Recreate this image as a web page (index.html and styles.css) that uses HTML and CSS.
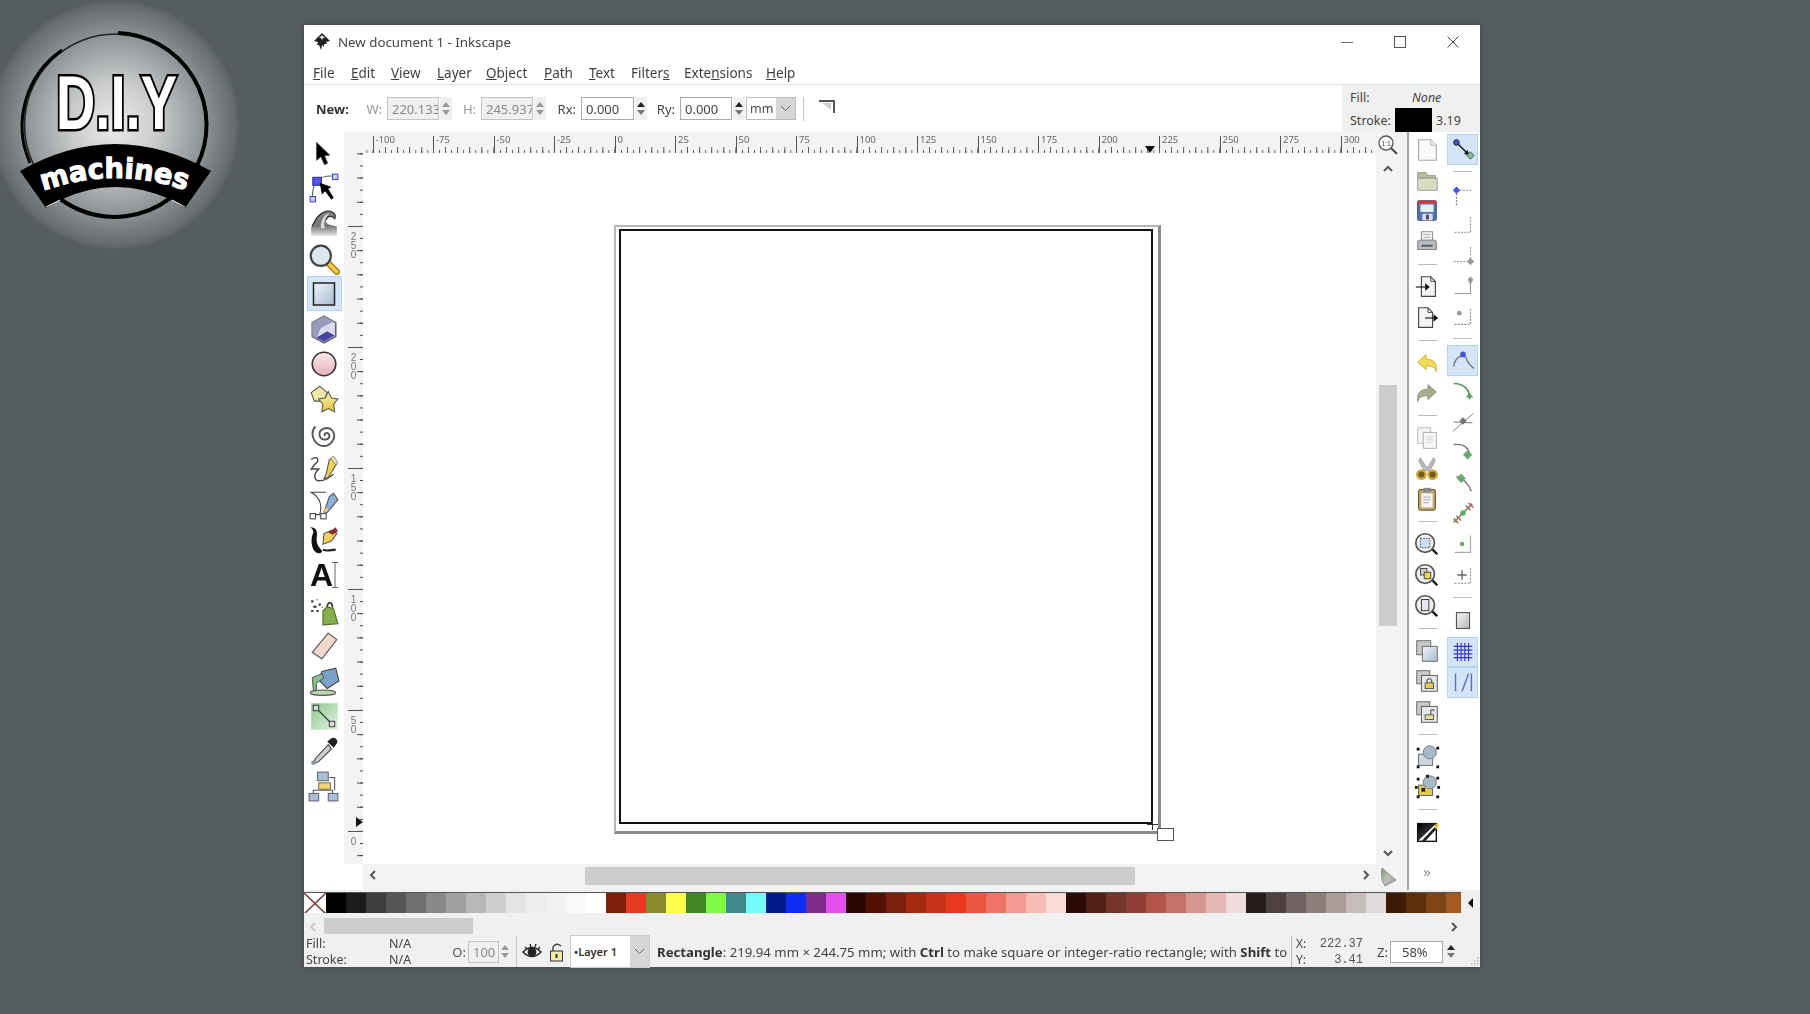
FILE: index.html
```html
<!DOCTYPE html>
<html lang="en">
<head>
<meta charset="utf-8">
<title>New document 1 - Inkscape</title>
<link rel="stylesheet" href="styles.css">
</head>
<body>
<svg class="defs" width="0" height="0" aria-hidden="true">
  <defs>
    <linearGradient id="gBlue" x1="0" y1="0" x2="1" y2="1"><stop offset="0" stop-color="#eef3f8"/><stop offset="1" stop-color="#a9bdd4"/></linearGradient>
    <linearGradient id="gPink" x1="0" y1="0" x2="0" y2="1"><stop offset="0" stop-color="#fbeaec"/><stop offset="1" stop-color="#e8aebb"/></linearGradient>
    <linearGradient id="gYel" x1="0" y1="0" x2="0" y2="1"><stop offset="0" stop-color="#fbf3b0"/><stop offset="1" stop-color="#e6c63c"/></linearGradient>
    <linearGradient id="gGray" x1="0" y1="0" x2="1" y2="1"><stop offset="0" stop-color="#f6f6f6"/><stop offset="1" stop-color="#b5b8bb"/></linearGradient>
    <linearGradient id="gWave" x1="0" y1="0" x2="0" y2="1"><stop offset="0" stop-color="#888"/><stop offset=".6" stop-color="#777"/><stop offset="1" stop-color="#e2e2e2"/></linearGradient>
    <linearGradient id="gGreen" x1="0" y1="0" x2="1" y2="1"><stop offset="0" stop-color="#8fca8f"/><stop offset="1" stop-color="#e0f2e0"/></linearGradient>
    <linearGradient id="gFill" x1="0" y1="0" x2="1" y2="1"><stop offset="0" stop-color="#000"/><stop offset=".55" stop-color="#333"/><stop offset="1" stop-color="#ddd"/></linearGradient>
    <linearGradient id="gCms" x1="0" y1="0" x2="1" y2="1"><stop offset="0" stop-color="#7fa06f"/><stop offset=".5" stop-color="#b9c4b0"/><stop offset="1" stop-color="#a689c0"/></linearGradient>
    <radialGradient id="gGlow"><stop offset="0" stop-color="#eceded"/><stop offset=".35" stop-color="#c9cbcc"/><stop offset=".72" stop-color="#8e9395"/><stop offset=".96" stop-color="#666c6f"/><stop offset="1" stop-color="#5a6064"/></radialGradient>
  </defs>
</svg>

<svg class="logo" width="240" height="250" viewBox="0 0 240 250" role="img" aria-label="D.I.Y machines">
  <circle cx="115" cy="125" r="124" fill="url(#gGlow)"/>
  <circle cx="115.5" cy="125" r="91" fill="none" stroke="#222" stroke-width="1.6"/>
  <path d="M118 33 A92 92 0 1 1 44 184" fill="none" stroke="#000" stroke-width="4"/>
  <path d="M30 163 A92 92 0 0 1 62 50" fill="none" stroke="#000" stroke-width="3"/>
  <text class="logo-diy" x="56" y="129" textLength="121" lengthAdjust="spacingAndGlyphs">D.I.Y</text>
  <path d="M20 171 Q115 117 211 171 L185 208 L172 200 Q115 174 60 200 L46 208 Z" fill="#000"/>
  <path d="M46 207 L60 200 M172 200 L185 207" stroke="#fff" stroke-width="1"/>
  <path id="logoArc" d="M43 191 Q115 165 188 191" fill="none"/>
  <text class="logo-mach"><textPath href="#logoArc" textLength="146" lengthAdjust="spacingAndGlyphs">machines</textPath></text>
</svg>

<div class="window">
  <header class="titlebar">
    <svg class="app-icon" width="20" height="20" viewBox="0 0 20 20"><path d="M10 1 L18 9 L14 10 L15 12 L12 12 L12 15 L10 13 L9 18 L7 13 L5 13 L6 10 L2 9 Z" fill="#222"/><path d="M10 3 L13 6 L11 6 L10 8 L9 6 L7 6 Z" fill="#ddd"/></svg>
    <span class="title-text">New document 1 - Inkscape</span>
    <div class="win-btns">
      <svg width="12" height="12" viewBox="0 0 12 12"><path d="M0 6.5H12" stroke="#666" stroke-width="1"/></svg>
      <svg width="12" height="12" viewBox="0 0 12 12"><rect x=".5" y=".5" width="11" height="11" fill="none" stroke="#555"/></svg>
      <svg width="12" height="12" viewBox="0 0 12 12"><path d="M.5 .5L11.5 11.5M11.5 .5L.5 11.5" stroke="#444"/></svg>
    </div>
  </header>

  <nav class="menubar">
    <span class="m-file"><u>F</u>ile</span><span class="m-edit"><u>E</u>dit</span><span class="m-view"><u>V</u>iew</span><span class="m-layer"><u>L</u>ayer</span><span class="m-object"><u>O</u>bject</span><span class="m-path"><u>P</u>ath</span><span class="m-text"><u>T</u>ext</span><span class="m-filters">Filter<u>s</u></span><span class="m-ext">Exte<u>n</u>sions</span><span><u>H</u>elp</span>
  </nav>

  <section class="toolopts">
    <b class="new-label">New:</b>
    <span class="lbl l34 dim">W:</span><span class="field off w52">220.133</span><span class="spin off"><i class="up"></i><i class="dn"></i></span>
    <span class="lbl l28 dim">H:</span><span class="field off w52">245.937</span><span class="spin off"><i class="up"></i><i class="dn"></i></span>
    <span class="lbl l32">Rx:</span><span class="field w53">0.000</span><span class="spin"><i class="up"></i><i class="dn"></i></span>
    <span class="lbl l33">Ry:</span><span class="field w52">0.000</span><span class="spin"><i class="up"></i><i class="dn"></i></span>
    <span class="unit"><span class="unit-text">mm</span><span class="chev"><svg width="11" height="7" viewBox="0 0 11 7"><path d="M1 1L5.500 5.500L10 1" fill="none" stroke="#666"/></svg></span></span>
    <span class="vsep"></span>
    <svg class="corner" width="18" height="14" viewBox="0 0 18 14"><path d="M1 1H16V13" fill="none" stroke="#555" stroke-width="2"/><path d="M4 3H13V10Z" fill="#ccc"/></svg>
    <div class="selstyle">
      <div class="sel-row"><span class="sel-lbl">Fill:</span><em class="sel-none">None</em></div>
      <div class="sel-row"><span class="sel-lbl">Stroke:</span><span class="swatch"></span><span class="sel-num">3.19</span></div>
    </div>
  </section>

  <div class="main">
    <aside class="tools">
      <div class="tool"><svg viewBox="0 0 30 30"><path d="M8 5V22L12 18.500L15.500 26L18.500 24.500L15.500 17.500L20.500 17Z" fill="#000" stroke="#333" stroke-width=".5"/></svg></div>
      <div class="tool"><svg viewBox="0 0 30 30"><path d="M8 8Q14 3 25 4M7 9Q4 16 4 24" fill="none" stroke="#666"/><rect x="4.500" y="5" width="8" height="7.500" fill="#5258e0" stroke="#2a2ea0"/><rect x="23" y="2" width="5" height="5" fill="#cfd0ff" stroke="#4448c0"/><rect x="2" y="23" width="5" height="5" fill="#cfd0ff" stroke="#4448c0"/><path d="M11 10L13 21L16 18L22 26L24 24L19 16L22 14Z" fill="#000"/></svg></div>
      <div class="tool"><svg viewBox="0 0 30 30"><path d="M3 27V19C6 12 9 6 17 4C23 3 27 7 25 11C23 8 18 8 17 12C16 16 20 17 27 18V27Z" fill="url(#gWave)"/><path d="M12 20C12 12 15 7 20 6C16 10 14 15 16 20Z" fill="#ddd"/><path d="M4 18C7 12 10 6 17 4C23 3 27 7 25 11C23 8 18 8 17 12" fill="none" stroke="#333" stroke-width="1.200"/></svg></div>
      <div class="tool"><svg viewBox="0 0 30 30"><path d="M18 18L27 27" stroke="#a07c10" stroke-width="6" stroke-linecap="round"/><path d="M19 19L27 27" stroke="#f0c84a" stroke-width="3.500" stroke-linecap="round"/><circle cx="12" cy="12" r="9.500" fill="#dde6f0" stroke="#444" stroke-width="2"/></svg></div>
      <div class="tool on"><svg viewBox="0 0 30 30"><rect x="4.500" y="4" width="21" height="22" fill="url(#gBlue)" stroke="#222" stroke-width="1.500"/></svg></div>
      <div class="tool"><svg viewBox="0 0 30 30"><path d="M15 3L26 9V22L15 28L4 22V9Z" fill="#dcdcf4" stroke="#666" stroke-width="1.500"/><path d="M15 3L4 9V22L8 24L12 14L24 8Z" fill="#9a9abd"/><path d="M8 23L18 17L25 21L15 27Z" fill="#4545a6"/></svg></div>
      <div class="tool"><svg viewBox="0 0 30 30"><circle cx="15" cy="15" r="11" fill="url(#gPink)" stroke="#333" stroke-width="1.500"/></svg></div>
      <div class="tool"><svg viewBox="0 0 30 30"><path d="M3 9L11 3L18 9L15 17L6 17Z" fill="#f3e9a8" stroke="#555"/><path d="M19 8L22 14L28 15L24 20L25 27L19 24L13 27L14 20L10 15L16 14Z" fill="url(#gYel)" stroke="#555"/></svg></div>
      <div class="tool"><svg viewBox="0 0 30 30"><path d="M16 16C14 13 19 12 20 15C21 20 13 21 11 16C9 9 19 6 23 11C28 18 20 27 12 25C4 22 2 12 7 7" fill="none" stroke="#555" stroke-width="1.800"/></svg></div>
      <div class="tool"><svg viewBox="0 0 30 30"><path d="M3 5C9 1 11 6 7 9L3 14H10C4 20 6 26 12 25C17 25 19 22 24 19" fill="none" stroke="#444" stroke-width="1.300"/><path d="M17 19L15 23L19 22L27 9L24 4L20 5Z" fill="#f2d458" stroke="#555"/><path d="M21 4L24 2L28 8L26 10Z" fill="#efe2b0" stroke="#555" stroke-width=".6"/></svg></div>
      <div class="tool"><svg viewBox="0 0 30 30"><path d="M2 3H17M3 3Q15 10 11 24H5" fill="none" stroke="#444"/><rect x="2" y="23" width="5" height="5" fill="#fff" stroke="#444"/><rect x="12" y="23" width="5" height="5" fill="#fff" stroke="#444"/><path d="M16 19L14 23L18 22L28 10L24 4L20 7Z" fill="#8fb0d8" stroke="#555"/><path d="M14 23L17 17L19 20Z" fill="#f2d458"/></svg></div>
      <div class="tool"><svg viewBox="0 0 30 30"><path d="M2 3C9 3 9 8 8 14C8 20 11 22 13 25C14 27 10 28 8 27C3 24 2 14 5 8C5 6 4 4 2 3Z" fill="#111"/><path d="M14 19L15 9L22 6L27 9L22 16Z" fill="#f2d458" stroke="#555"/><path d="M19 8L26 3L28 7L23 10Z" fill="#8a2f3a"/><path d="M14 24C18 26 22 24 26 24" stroke="#222" stroke-width="2" fill="none"/></svg></div>
      <div class="tool"><span class="tool-a">A</span><svg class="tool-cursor" viewBox="0 0 6 26"><path d="M3 0V26M0 .5H6M0 25.500H6" stroke="#666" fill="none"/></svg></div>
      <div class="tool"><svg viewBox="0 0 30 30"><path d="M14 15L18 11L24 13L28 27L14 28Z" fill="#88b04a" stroke="#4b6b22"/><path d="M18 11C18 6 23 6 23 12" fill="none" stroke="#333" stroke-width="1.500"/><path d="M3 5h2v2H3zM8 4h1v1H8zM5 10h3v2H5zM10 8h2v2h-2zM3 14h2v2H3zM8 14h2v2H8zM13 11h1v1h-1z" fill="#333"/></svg></div>
      <div class="tool"><svg viewBox="0 0 30 30"><path d="M19 3L27 9L13 27L4 21Z" fill="#f3d9cc" stroke="#666" stroke-width="1.200"/></svg></div>
      <div class="tool"><svg viewBox="0 0 30 30"><ellipse cx="14" cy="26" rx="12" ry="2.500" fill="#b7d7b0" stroke="#555"/><path d="M13 6L26 3L29 15L18 22L10 14Z" fill="#7ba2c9" stroke="#444"/><path d="M4 12L13 8L15 12L8 17L8 24L5 24Z" fill="#86c08c" stroke="#444" stroke-width=".8"/></svg></div>
      <div class="tool"><svg viewBox="0 0 30 30"><rect x="3" y="3" width="25" height="25" fill="url(#gGreen)"/><path d="M8 8L22 22" stroke="#444" stroke-width="1.300"/><rect x="5" y="5" width="5" height="5" fill="#ddd" stroke="#444"/><rect x="20" y="20" width="5" height="5" fill="#ddd" stroke="#444"/></svg></div>
      <div class="tool"><svg viewBox="0 0 30 30"><path d="M18 6L24 12L27 8C29 5 25 1 22 3Z" fill="#222"/><path d="M19 9L7 22L5 27L10 25L22 13Z" fill="#c9ccd0" stroke="#444"/><circle cx="5" cy="26" r="2" fill="#7c94b0"/></svg></div>
      <div class="tool"><svg viewBox="0 0 30 30"><path d="M5 25V19H23V25M14 19V15M20 7H25V19" fill="none" stroke="#555"/><rect x="9" y="2" width="10" height="8" fill="#a8bfd8" stroke="#667"/><rect x="10" y="12" width="11" height="6" fill="#f0d870" stroke="#776"/><rect x="1" y="22" width="9" height="7" fill="#a8bfd8" stroke="#667"/><rect x="19" y="22" width="9" height="7" fill="#a8bfd8" stroke="#667"/></svg></div>
    </aside>

    <div class="work">
      <div class="corner-cell"></div>
      <div class="hruler">
        <div class="hlead"></div>
        <div class="hcell">-100</div><div class="hcell">-75</div><div class="hcell">-50</div><div class="hcell">-25</div><div class="hcell">0</div><div class="hcell">25</div><div class="hcell">50</div><div class="hcell">75</div><div class="hcell">100</div><div class="hcell">125</div><div class="hcell">150</div><div class="hcell">175</div><div class="hcell">200</div><div class="hcell">225</div><div class="hcell">250</div><div class="hcell">275</div><div class="hcell">300</div>
        <i class="hmark"></i>
      </div>
      <div class="zoom-cell"><svg width="22" height="22" viewBox="0 0 22 22"><circle cx="9" cy="9" r="7" fill="#fff" stroke="#555" stroke-width="1.300"/><path d="M14 14L20 20" stroke="#444" stroke-width="2"/><text class="zoom-txt" x="9" y="12" text-anchor="middle">1:1</text></svg></div>

      <div class="vruler">
        <div class="vlead"></div>
        <div class="vcell"><span class="vnum">250</span></div>
        <div class="vcell"><span class="vnum">200</span></div>
        <div class="vcell"><span class="vnum">150</span></div>
        <div class="vcell"><span class="vnum">100</span></div>
        <div class="vcell"><span class="vnum">50</span></div>
        <div class="vcell"><span class="vnum">0</span></div>
        <i class="vmark"></i>
      </div>

      <div class="canvas">
        <div class="page"></div>
        <div class="doc-rect"></div>
        <div class="handle"></div>
        <svg class="cross" width="11" height="11" viewBox="0 0 11 11"><path d="M5.500 0V11M0 5.500H11" stroke="#333"/></svg>
      </div>

      <div class="vscroll">
        <svg width="12" height="8" viewBox="0 0 12 8"><path d="M2 6L6 2L10 6" fill="none" stroke="#555" stroke-width="2"/></svg>
        <div class="vthumb"></div>
        <svg width="12" height="8" viewBox="0 0 12 8"><path d="M2 2L6 6L10 2" fill="none" stroke="#555" stroke-width="2"/></svg>
      </div>

      <div class="blank-cell"></div>
      <div class="hscroll">
        <svg width="8" height="12" viewBox="0 0 8 12"><path d="M6 2L2 6L6 10" fill="none" stroke="#555" stroke-width="2"/></svg>
        <div class="hthumb"></div>
        <svg width="8" height="12" viewBox="0 0 8 12"><path d="M2 2L6 6L2 10" fill="none" stroke="#555" stroke-width="2"/></svg>
      </div>
      <div class="cms-cell"><svg width="18" height="20" viewBox="0 0 18 20"><path d="M3 1L17 13L6 19Q1 12 3 1Z" fill="url(#gCms)" stroke="#777" stroke-width=".7"/></svg></div>
    </div>

    <aside class="right">
      <div class="cmds">
        <div class="cmd"><svg viewBox="0 0 30 30"><path d="M6 4H19L25 10V26H6Z" fill="#fafafa" stroke="#aaa" stroke-width="1.200"/><path d="M19 4V10H25" fill="#eee" stroke="#bbb"/></svg></div>
        <div class="cmd"><svg viewBox="0 0 30 30"><path d="M5 6H14L16 9H24V12H5Z" fill="#bcbf9d" stroke="#999"/><path d="M5 12H26V25H5Z" fill="#dadcc0" stroke="#999"/></svg></div>
        <div class="cmd"><svg viewBox="0 0 30 30"><rect x="5" y="4" width="20" height="21" rx="1.500" fill="#4f77b3" stroke="#345"/><rect x="5" y="4" width="20" height="3" fill="#d33"/><rect x="8" y="8" width="14" height="8" fill="#e8eef6"/><rect x="10" y="18" width="11" height="7" fill="#dde"/><rect x="14" y="19" width="3" height="5" fill="#445"/></svg></div>
        <div class="cmd"><svg viewBox="0 0 30 30"><rect x="9" y="4" width="12" height="10" fill="#f4f4f4" stroke="#888"/><path d="M11 7H19M11 10H19" stroke="#aaa"/><path d="M5 15Q5 13 8 13H22Q25 13 25 15V23H5Z" fill="#b8bcc0" stroke="#777"/><rect x="9" y="18" width="12" height="2" fill="#555"/></svg></div>
        <div class="sep"></div>
        <div class="cmd"><svg viewBox="0 0 30 30"><path d="M9 4H19L24 9V25H9Z" fill="#f4f4f4" stroke="#444" stroke-width="1.200"/><path d="M19 4V9H24" fill="none" stroke="#444"/><path d="M3 15H15" stroke="#111" stroke-width="1.200"/><path d="M13 11L18 15L13 19Z" fill="#111"/></svg></div>
        <div class="cmd"><svg viewBox="0 0 30 30"><path d="M6 4H16L21 9V25H6Z" fill="#f4f4f4" stroke="#444" stroke-width="1.200"/><path d="M16 4V9H21" fill="none" stroke="#444"/><path d="M13 15H24" stroke="#111" stroke-width="1.200"/><path d="M22 11L27 15L22 19Z" fill="#111"/></svg></div>
        <div class="sep"></div>
        <div class="cmd"><svg viewBox="0 0 30 30"><path d="M5 14L14 6V11C22 11 26 15 25 24C23 19 20 18 14 18V22Z" fill="#f1da55" stroke="#c8ad2e"/></svg></div>
        <div class="cmd"><svg viewBox="0 0 30 30"><path d="M25 14L16 6V11C8 11 4 15 5 24C7 19 10 18 16 18V22Z" fill="#a8ac8c" stroke="#8d917a"/></svg></div>
        <div class="sep"></div>
        <div class="cmd"><svg viewBox="0 0 30 30"><rect x="5" y="4" width="14" height="17" fill="#f4f4f4" stroke="#bbb"/><rect x="11" y="9" width="14" height="17" fill="#f8f8f8" stroke="#aaa"/><path d="M14 14H22M14 17H22M14 20H20" stroke="#ccc"/></svg></div>
        <div class="cmd"><svg viewBox="0 0 30 30"><path d="M8 3L15 14L22 3L24 6L18 17L12 17L6 6Z" fill="#bbb" stroke="#888" stroke-width=".7"/><circle cx="9" cy="21" r="4.500" fill="#6f5a20" stroke="#cfa83a" stroke-width="2.500"/><circle cx="21" cy="21" r="4.500" fill="#6f5a20" stroke="#cfa83a" stroke-width="2.500"/></svg></div>
        <div class="cmd"><svg viewBox="0 0 30 30"><rect x="6" y="5" width="18" height="22" rx="2" fill="#c5a971" stroke="#776030" stroke-width="1.300"/><rect x="9" y="9" width="12" height="15" fill="#f6f6f6"/><rect x="11" y="3" width="8" height="5" fill="#8a8a8a"/><path d="M11 13H19M11 16H19M11 19H17" stroke="#aaa"/></svg></div>
        <div class="sep"></div>
        <div class="cmd"><svg viewBox="0 0 30 30"><path d="M20 20L26 26" stroke="#111" stroke-width="2.500"/><circle cx="13" cy="14" r="10" fill="#eee" stroke="#555" stroke-width="1.800"/><rect x="8" y="9" width="10" height="10" fill="#cfdcf0" stroke="#333" stroke-dasharray="1.500 1.500"/></svg></div>
        <div class="cmd"><svg viewBox="0 0 30 30"><path d="M20 20L26 26" stroke="#111" stroke-width="2.500"/><circle cx="13" cy="14" r="10" fill="#eee" stroke="#555" stroke-width="1.800"/><rect x="8" y="8" width="7" height="7" fill="#ccc" stroke="#444"/><rect x="12" y="12" width="7" height="7" fill="#e8d25e" stroke="#444"/></svg></div>
        <div class="cmd"><svg viewBox="0 0 30 30"><path d="M20 20L26 26" stroke="#111" stroke-width="2.500"/><circle cx="13" cy="14" r="10" fill="#eee" stroke="#555" stroke-width="1.800"/><rect x="9" y="8" width="8" height="12" fill="#e4e8ee" stroke="#333"/></svg></div>
        <div class="sep"></div>
        <div class="cmd"><svg viewBox="0 0 30 30"><rect x="4" y="4" width="15" height="15" fill="#c8c8c8" stroke="#666"/><rect x="10" y="10" width="16" height="16" fill="url(#gBlue)" stroke="#666"/></svg></div>
        <div class="cmd"><svg viewBox="0 0 30 30"><rect x="4" y="4" width="14" height="14" fill="#c8c8c8" stroke="#666"/><rect x="9" y="9" width="17" height="17" fill="#e4e6e8" stroke="#555"/><rect x="13" y="17" width="9" height="6" fill="#e8cc50" stroke="#555"/><path d="M15 17V14Q17.500 11 20 14V17" fill="none" stroke="#555" stroke-width="1.200"/></svg></div>
        <div class="cmd"><svg viewBox="0 0 30 30"><rect x="4" y="4" width="14" height="14" fill="#c8c8c8" stroke="#666"/><rect x="9" y="9" width="17" height="17" fill="#e4e6e8" stroke="#555"/><rect x="13" y="18" width="9" height="5" fill="#e8e090" stroke="#555"/><path d="M19 18V14Q21 11 23 14" fill="none" stroke="#555" stroke-width="1.200"/></svg></div>
        <div class="sep"></div>
        <div class="cmd"><svg viewBox="0 0 30 30"><rect x="6" y="12" width="15" height="12" fill="#cfd6de" stroke="#666"/><circle cx="18" cy="10" r="7" fill="#a9b8c6" stroke="#778"/><path d="M4 5h3v3H4zM25 4h3v3h-3zM4 24h3v3H4zM25 24h3v3h-3z" fill="#111"/></svg></div>
        <div class="cmd"><svg viewBox="0 0 30 30"><rect x="6" y="13" width="15" height="11" fill="#e8cc50" stroke="#555"/><rect x="9" y="16" width="4" height="4" fill="#222"/><circle cx="18" cy="10" r="7" fill="#a9b8c6" stroke="#778"/><path d="M4 5h3v3H4zM25 4h3v3h-3zM4 24h3v3H4zM25 24h3v3h-3zM14 2h3v3h-3zM2 14h3v3H2zM26 14h3v3h-3z" fill="#111"/></svg></div>
        <div class="sep"></div>
        <div class="cmd"><svg viewBox="0 0 30 30"><rect x="5" y="6" width="20" height="19" fill="#fff" stroke="#111" stroke-width="1.500"/><path d="M5 6H25L5 25Z" fill="url(#gFill)"/><path d="M9 25L23 10L25 12L13 25Z" fill="#222"/><path d="M23 9L26 5L28 8L25 12Z" fill="#e8c840"/></svg></div>
        <div class="more">»</div>
      </div>

      <div class="snaps">
        <div class="snap on"><svg viewBox="0 0 30 30"><path d="M8 8L21 21" stroke="#111" stroke-width="1.500"/><path d="M16 20L22 22L20 16Z" fill="#111"/><rect x="5" y="5" width="6" height="6" rx="3" fill="#4a50d0" stroke="#223"/><path d="M23 18L27 22L23 26L19 22Z" fill="#86c090" stroke="#456"/></svg></div>
        <div class="sep snapsep"></div>
        <div class="snap"><svg viewBox="0 0 30 30"><path d="M8 11H24M8 11V28" stroke="#888" stroke-dasharray="2 1.500" stroke-width="1.300"/><path d="M8 7L12 11L8 15L4 11Z" fill="#4a50e0"/></svg></div>
        <div class="snap"><svg viewBox="0 0 30 30"><path d="M6 24H23V6" fill="none" stroke="#999" stroke-dasharray="2 1.500" stroke-width="1.300"/></svg></div>
        <div class="snap"><svg viewBox="0 0 30 30"><path d="M5 22H23V6" fill="none" stroke="#999" stroke-dasharray="2 1.500" stroke-width="1.300"/><path d="M23 18L27 22L23 26L19 22Z" fill="#999"/></svg></div>
        <div class="snap"><svg viewBox="0 0 30 30"><path d="M6 24H23V6" fill="none" stroke="#999" stroke-width="1.100"/><path d="M23 6L26 9L23 15L20 9Z" fill="#999"/></svg></div>
        <div class="snap"><svg viewBox="0 0 30 30"><path d="M6 24H23V6" fill="none" stroke="#888" stroke-dasharray="2 1.500" stroke-width="1.300"/><circle cx="11" cy="12" r="2.500" fill="#999"/></svg></div>
        <div class="sep snapsep"></div>
        <div class="snap on"><svg viewBox="0 0 30 30"><path d="M5 22C6 14 12 8 18 12C20 18 22 21 27 24" fill="none" stroke="#777" stroke-width="1.500"/><circle cx="15" cy="9" r="3" fill="#4a50e0"/></svg></div>
        <div class="snap"><svg viewBox="0 0 30 30"><path d="M5 7C15 7 23 13 22 24" fill="none" stroke="#5a9a5a" stroke-width="1.800"/><path d="M18 22H26L22 17Z" fill="#5a9a5a"/></svg></div>
        <div class="snap"><svg viewBox="0 0 30 30"><path d="M4 25L26 6M5 15L25 16" stroke="#777"/><path d="M15 10L19 14L15 18L11 14Z" fill="#777"/></svg></div>
        <div class="snap"><svg viewBox="0 0 30 30"><path d="M5 7C15 6 21 10 22 18" fill="none" stroke="#777" stroke-width="1.500"/><path d="M20 13L25 18L20 23L15 18Z" fill="#6aa870"/></svg></div>
        <div class="snap"><svg viewBox="0 0 30 30"><path d="M8 8C16 10 22 18 24 24" fill="none" stroke="#777" stroke-width="1.500"/><path d="M13 5L18 10L13 15L8 10Z" fill="#6aa870"/></svg></div>
        <div class="snap"><svg viewBox="0 0 30 30"><path d="M5 25L25 5" stroke="#6aa870" stroke-width="2"/><path d="M5 21L10 26M8 18L13 23M18 7L23 12M21 4L26 9" stroke="#c05050" stroke-width="1.500"/><circle cx="15" cy="15" r="3" fill="#6aa870"/></svg></div>
        <div class="snap"><svg viewBox="0 0 30 30"><path d="M6 24H23V6" fill="none" stroke="#aaa" stroke-width="1.300"/><circle cx="14" cy="15" r="2.500" fill="#6aa870"/></svg></div>
        <div class="snap"><svg viewBox="0 0 30 30"><path d="M6 24H23V6" fill="none" stroke="#999" stroke-dasharray="2 1.500" stroke-width="1.300"/><path d="M14 10V20M9 15H19" stroke="#666" stroke-width="1.500"/></svg></div>
        <div class="sep snapsep2"></div>
        <div class="snap"><svg viewBox="0 0 30 30"><rect x="8" y="6" width="14" height="17" fill="url(#gGray)" stroke="#555" stroke-width="1.200"/></svg></div>
        <div class="snap on"><svg viewBox="0 0 30 30"><path d="M9 5V25M13 5V25M17 5V25M21 5V25M5 9H25M5 13H25M5 17H25M5 21H25" stroke="#3434c8" stroke-width="1.200"/></svg></div>
        <div class="snap on"><svg viewBox="0 0 30 30"><path d="M7 6V25M14 25L21 6M24 6V25" fill="none" stroke="#5a6ec8" stroke-width="1.500"/></svg></div>
      </div>
    </aside>
  </div>

  <div class="palette-wrap">
    <div class="palette-row">
      <div class="palette">
        <span class="none"><svg width="22" height="21" viewBox="0 0 22 21"><path d="M0 0L22 21M22 0L0 21" stroke="#7a3a36" stroke-width="1.500"/></svg></span>
        <i class="c01"></i><i class="c02"></i><i class="c03"></i><i class="c04"></i><i class="c05"></i><i class="c06"></i><i class="c07"></i><i class="c08"></i><i class="c09"></i><i class="c10"></i><i class="c11"></i><i class="c12"></i><i class="c13"></i><i class="c14"></i>
        <i class="c15"></i><i class="c16"></i><i class="c17"></i><i class="c18"></i><i class="c19"></i><i class="c20"></i><i class="c21"></i><i class="c22"></i><i class="c23"></i><i class="c24"></i><i class="c25"></i><i class="c26"></i>
        <i class="c27"></i><i class="c28"></i><i class="c29"></i><i class="c30"></i><i class="c31"></i><i class="c32"></i><i class="c33"></i><i class="c34"></i><i class="c35"></i><i class="c36"></i><i class="c37"></i>
        <i class="c38"></i><i class="c39"></i><i class="c40"></i><i class="c41"></i><i class="c42"></i><i class="c43"></i><i class="c44"></i><i class="c45"></i><i class="c46"></i>
        <i class="c47"></i><i class="c48"></i><i class="c49"></i><i class="c50"></i><i class="c51"></i><i class="c52"></i><i class="c53"></i>
        <i class="c54"></i><i class="c55"></i><i class="c56"></i><i class="c57"></i>
      </div>
      <svg class="pal-arrow" width="6" height="10" viewBox="0 0 6 10"><path d="M5 0V10L0 5Z" fill="#111"/></svg>
    </div>
    <div class="pal-scroll">
      <svg width="8" height="12" viewBox="0 0 8 12"><path d="M6 2L2 6L6 10" fill="none" stroke="#ccc" stroke-width="2"/></svg>
      <div class="pal-thumb"></div>
      <svg width="8" height="12" viewBox="0 0 8 12"><path d="M2 2L6 6L2 10" fill="none" stroke="#555" stroke-width="2"/></svg>
    </div>
  </div>

  <footer class="status">
    <div class="fs-box">
      <div class="fs-row"><span class="fs-lbl">Fill:</span><span>N/A</span></div>
      <div class="fs-row"><span class="fs-lbl">Stroke:</span><span>N/A</span></div>
    </div>
    <span class="lbl op-lbl">O:</span><span class="field off op-field">100</span><span class="spin off op-spin"><i class="up"></i><i class="dn"></i></span>
    <span class="vsep st-sep"></span>
    <svg class="eye" width="22" height="20" viewBox="0 0 22 20"><path d="M2 10Q11 1 20 10Q11 19 2 10Z" fill="#fff" stroke="#222" stroke-width="1.500"/><circle cx="11" cy="10" r="4.500" fill="#222"/><path d="M4 5L6 7M9 2L10 5M15 2L14 5M19 5L17 7" stroke="#222" stroke-width="1.300"/></svg>
    <svg class="lock" width="16" height="20" viewBox="0 0 16 20"><rect x="1.500" y="9" width="12" height="10" fill="#f2e8a8" stroke="#333"/><path d="M4 9V5Q7 0 12 4" fill="none" stroke="#333" stroke-width="1.300"/><rect x="6.500" y="12" width="2" height="4" fill="#333"/></svg>
    <div class="layer"><span class="layer-text">•Layer 1</span><span class="chev layer-chev"><svg width="11" height="7" viewBox="0 0 11 7"><path d="M1 1L5.500 5.500L10 1" fill="none" stroke="#666"/></svg></span></div>
    <div class="msg"><b>Rectangle</b>: 219.94 mm × 244.75 mm; with <b>Ctrl</b> to make square or integer-ratio rectangle; with <b>Shift</b> to</div>
    <div class="coords">
      <div class="coord-row"><span>X:</span><span class="coord-val">222.37</span></div>
      <div class="coord-row"><span>Y:</span><span class="coord-val">3.41</span></div>
    </div>
    <span class="lbl z-lbl">Z:</span><span class="field z-field">58%</span><span class="spin z-spin"><i class="up"></i><i class="dn"></i></span>
    <svg class="grip" width="10" height="10" viewBox="0 0 10 10"><path d="M8 1h1.500v1.500H8zM5 4h1.500v1.500H5zM8 4h1.500v1.500H8zM2 7h1.500v1.500H2zM5 7h1.500v1.500H5zM8 7h1.500v1.500H8z" fill="#bbb"/></svg>
  </footer>
</div>
</body>
</html>
```

FILE: styles.css
```css
* { box-sizing: border-box; }
html, body { margin: 0; padding: 0; }
body {
  width: 1810px;
  height: 1014px;
  overflow: hidden;
  position: relative;
  background: #565d61;
  font-family: "Noto Sans", "Open Sans", sans-serif;
  color: #3a3a3a;
}
.defs { position: absolute; }
.logo { position: absolute; left: 0; top: 0; }
.logo-diy {
  font-family: "Liberation Sans", sans-serif;
  font-weight: 700;
  font-size: 76px;
  fill: #fff;
  stroke: #000;
  stroke-width: 5px;
  paint-order: stroke;
  stroke-linejoin: miter;
}
.logo-mach {
  font-family: "DejaVu Sans", sans-serif;
  font-weight: 700;
  font-size: 28px;
  fill: #fff;
  stroke: #fff;
  stroke-width: 1.100px;
}

.window {
  position: absolute;
  left: 304px;
  top: 25px;
  width: 1176px;
  height: 942px;
  background: #fff;
  display: flex;
  flex-direction: column;
  box-shadow: 0 0 6px rgba(0,0,0,.3);
  filter: blur(.35px);
}

/* title + menu */
.titlebar { height: 33px; display: flex; align-items: center; padding-left: 8px; flex: none; }
.app-icon { flex: none; }
.title-text { margin-left: 6px; font-size: 13.300px; color: #444; white-space: nowrap; }
.win-btns { margin-left: auto; display: flex; gap: 41px; padding-right: 21px; }
.menubar {
  height: 27px;
  flex: none;
  display: flex;
  align-items: center;
  padding: 4px 0 0 9px;
  font-size: 13.500px;
  color: #3f3f3f;
  border-bottom: 1px solid #e2e2e2;
}
.menubar span { white-space: nowrap; }
.m-file { width: 38px; } .m-edit { width: 40px; } .m-view { width: 46px; } .m-layer { width: 49px; }
.m-object { width: 58px; } .m-path { width: 45px; } .m-text { width: 42px; } .m-filters { width: 53px; } .m-ext { width: 82px; }

/* tool options */
.toolopts { height: 47px; flex: none; display: flex; align-items: center; padding-left: 12px; font-size: 13px; position: relative; }
.new-label { width: 35px; font-size: 13px; color: #333; }
.lbl { text-align: right; padding-right: 5px; flex: none; color: #444; font-size: 13px; }
.lbl.dim { color: #999; }
.l34 { width: 36px; } .l28 { width: 29px; } .l32 { width: 35px; } .l33 { width: 33px; }
.field {
  height: 23px;
  border: 1px solid #ababab;
  background: #fff;
  display: flex;
  align-items: center;
  padding-left: 4px;
  font-size: 13px;
  color: #444;
  overflow: hidden;
  white-space: nowrap;
  flex: none;
}
.field.off { background: #f0f0f0; color: #8a8a8a; border-color: #c4c4c4; }
.w52 { width: 52px; } .w53 { width: 53px; }
.spin { width: 12px; height: 23px; display: flex; flex-direction: column; align-items: center; justify-content: space-around; background: #f0f0f0; margin-left: 1px; flex: none; padding: 3px 0; }
.spin i { width: 0; height: 0; border-left: 4px solid transparent; border-right: 4px solid transparent; display: block; }
.spin .up { border-bottom: 5px solid #222; }
.spin .dn { border-top: 5px solid #777; }
.spin.off .up { border-bottom-color: #999; }
.spin.off .dn { border-top-color: #999; }
.unit { width: 50px; height: 23px; margin-left: 1px; display: flex; border: 1px solid #bbb; flex: none; align-items: center; }
.unit-text { flex: 1; padding-left: 3px; font-size: 12.500px; color: #444; }
.chev { width: 19px; height: 100%; background: #d6d6d6; display: flex; align-items: center; justify-content: center; flex: none; }
.vsep { width: 1px; height: 24px; background: #c4c4c4; margin-left: 7px; flex: none; }
.corner { margin-left: 14px; margin-top: -4px; flex: none; }
.selstyle {
  margin-left: auto;
  width: 138px;
  height: 100%;
  background: #f0f0f0;
  padding: 3px 0 0 8px;
  flex: none;
  font-size: 12.500px;
  color: #444;
  display: flex;
  flex-direction: column;
  justify-content: flex-end;
}
.sel-row { display: flex; align-items: center; }
.sel-row:first-child { height: 23px; padding-bottom: 2px; }
.sel-row:last-child { height: 24px; }
.sel-lbl { width: 45px; flex: none; }
.sel-none { margin-left: 17px; }
.swatch { width: 37px; height: 24px; background: #000; flex: none; }
.sel-num { margin-left: 4px; }

/* main area */
.main { flex: none; height: 758px; display: flex; }
.tools { width: 40px; flex: none; background: #fff; padding-top: 3.500px; display: flex; flex-direction: column; align-items: center; }
.tool { width: 35px; height: 35.200px; flex: none; display: flex; align-items: center; justify-content: center; border: 1px solid transparent; }
.tool svg { width: 32px; height: 32px; flex: none; }
.tool.on { background: #d3e5f7; border-color: #b2d4f2; }
.tool.on svg { width: 30px; height: 30px; }
.tool .tool-cursor { width: 6px; height: 26px; margin-left: -1px; }
.tool-a { font-family: "Liberation Sans", sans-serif; font-weight: 700; font-size: 32px; line-height: 30px; color: #111; }

.work {
  flex: none;
  width: 1063px;
  display: grid;
  grid-template-columns: 19px 1013px 31px;
  grid-template-rows: 21px 711px 26px;
  background: #f3f3f3;
}
.hruler { display: flex; overflow: hidden; position: relative; }
.hlead {
  flex: 0 0 9.500px;
  margin-top: 4px;
  background-image: linear-gradient(90deg, #555 1px, transparent 1px);
  background-size: 6.050px 3px;
  background-position: 3.450px bottom;
  background-repeat: repeat-x;
}
.hcell {
  flex: 0 0 60.500px;
  height: 17px;
  border-left: 1px solid #555;
  margin-top: 4px;
  padding: 0 0 0 2px;
  font-size: 9.500px;
  line-height: 8px;
  color: #666;
  background-image:
    linear-gradient(90deg, #555 1px, transparent 1px),
    linear-gradient(90deg, #555 1px, transparent 1px);
  background-size: 6.050px 3px, 12.100px 6px;
  background-position: -1px bottom, -1px bottom;
  background-repeat: repeat-x;
}
.hmark { position: absolute; left: 782px; bottom: 0; width: 0; height: 0; border-left: 5px solid transparent; border-right: 5px solid transparent; border-top: 7px solid #111; }
.zoom-cell { display: flex; align-items: center; justify-content: flex-start; padding-top: 4px; padding-left: 1px; }
.zoom-txt { font-family: "Liberation Sans", sans-serif; font-size: 7px; fill: #444; }

.vruler { overflow: hidden; position: relative; }
.vlead {
  height: 73px;
  background-image:
    linear-gradient(#444 1px, transparent 1px),
    linear-gradient(#444 1px, transparent 1px);
  background-size: 3px 12.100px, 6px 24.200px;
  background-position: right 0 top .4px, right 0 top .4px;
  background-repeat: repeat-y;
}
.vcell {
  height: 121px;
  border-top: 1px solid #555;
  margin-left: 4px;
  padding: 4px 0 0 0;
  background-image:
    linear-gradient(#444 1px, transparent 1px),
    linear-gradient(#444 1px, transparent 1px);
  background-size: 3px 12.100px, 6px 24.200px;
  background-position: right 0 top -1px, right 0 top -1px;
  background-repeat: repeat-y;
}
.vnum {
  display: block;
  width: 10px;
  writing-mode: vertical-rl;
  text-orientation: upright;
  font-family: "Liberation Sans", sans-serif;
  font-size: 10px;
  line-height: 10px;
  letter-spacing: -2px;
  color: #777;
}
.vmark { position: absolute; right: 0; top: 664px; width: 0; height: 0; border-top: 5px solid transparent; border-bottom: 5px solid transparent; border-left: 7px solid #111; }

.canvas { background: #fff; position: relative; overflow: hidden; }
.page {
  position: absolute;
  left: 251px;
  top: 72px;
  width: 547px;
  height: 609px;
  border-left: 2px solid #b6b6b6;
  border-top: 2px solid #b6b6b6;
  border-right: 3px solid #8a8a8a;
  border-bottom: 3px solid #8a8a8a;
}
.doc-rect {
  position: absolute;
  left: 256px;
  top: 76px;
  width: 534px;
  height: 595px;
  border: 2px solid #111;
}
.handle { position: absolute; left: 794px; top: 675px; width: 17px; height: 13px; background: #fff; border: 1px solid #555; }
.cross { position: absolute; left: 784px; top: 666px; }

.vscroll { display: flex; flex-direction: column; align-items: flex-start; padding: 12px 0 7px 6px; position: relative; }
.vthumb { position: absolute; left: 3px; top: 232px; width: 18px; height: 241px; background: #cdcdcd; }
.vscroll svg:last-child { margin-top: auto; }
.hscroll { display: flex; align-items: center; padding: 0 6px 5px 6px; position: relative; justify-content: space-between; background: #f3f3f3; }
.hthumb { position: absolute; left: 222px; top: 3px; width: 550px; height: 18px; background: #cdcdcd; }
.cms-cell { display: flex; justify-content: flex-start; align-items: center; padding-left: 3px; }
.blank-cell { background: #fff; }

.right { flex: none; width: 73px; background: #fff; border-left: 2px solid #a6a6a6; display: flex; }
.cmds { width: 36px; flex: none; padding-top: 3px; display: flex; flex-direction: column; align-items: center; }
.snaps { width: 33px; flex: none; padding-top: 2px; display: flex; flex-direction: column; align-items: center; margin-left: 1px; }
.cmd, .snap { height: 30.600px; width: 30px; flex: none; display: flex; align-items: center; justify-content: center; }
.cmd svg, .snap svg { width: 28px; height: 28px; flex: none; }
.snap { width: 31px; border: 1px solid transparent; }
.snap.on { background: #d3e5f7; border-color: #b2d4f2; }
.sep { height: 14.400px; flex: none; width: 19px; display: flex; align-items: center; }
.sep::after { content: ""; display: block; width: 100%; height: 1px; background: #bdbdbd; }
.snapsep { height: 13.800px; }
.snapsep2 { height: 16px; }
.more { margin-top: 15px; color: #8a8aa5; font-size: 15px; line-height: 16px; }

/* palette */
.palette-wrap { height: 46px; flex: none; background: #f0f0f0; padding-top: 2px; }
.palette-row { height: 21px; display: flex; align-items: center; }
.palette { width: 1157px; height: 21px; display: flex; overflow: hidden; flex: none; border-top: 1px solid #555; }
.palette .none { width: 22px; flex: none; background: #fff; }
.palette i { width: 20px; flex: none; display: block; height: 100%; }
.pal-arrow { margin-left: 7px; }
.c01{background:#000}.c02{background:#1c1c1c}.c03{background:#3d3d3d}.c04{background:#555}.c05{background:#707070}.c06{background:#888}.c07{background:#9f9f9f}.c08{background:#b8b8b8}.c09{background:#cfcfcf}.c10{background:#e3e3e3}.c11{background:#ececec}.c12{background:#f2f2f2}.c13{background:#f8f8f8}.c14{background:#fff}
.c15{background:#7f1d0d}.c16{background:#e63b23}.c17{background:#8a8a2a}.c18{background:#fffb4d}.c19{background:#3f8526}.c20{background:#7dfa4a}.c21{background:#3f8a8a}.c22{background:#74fbfb}.c23{background:#031a8c}.c24{background:#0f2cf5}.c25{background:#7f2a8c}.c26{background:#e54ff0}
.c27{background:#2a0700}.c28{background:#520f02}.c29{background:#7b1e0e}.c30{background:#a3290f}.c31{background:#c73319}.c32{background:#e8391f}.c33{background:#ec5540}.c34{background:#ef7468}.c35{background:#f49b93}.c36{background:#f6bdb7}.c37{background:#fadad7}
.c38{background:#2d0b05}.c39{background:#512018}.c40{background:#76352a}.c41{background:#913f36}.c42{background:#b45348}.c43{background:#c6706a}.c44{background:#d69791}.c45{background:#e5b8b3}.c46{background:#f0dcda}
.c47{background:#271e1b}.c48{background:#4d403e}.c49{background:#706260}.c50{background:#8f7d7b}.c51{background:#ae9c9a}.c52{background:#c8bcba}.c53{background:#e0dbda}
.c54{background:#3d1a05}.c55{background:#5c2f0c}.c56{background:#7f4416}.c57{background:#a55a1f}
.pal-scroll { height: 23px; margin-top: 1px; position: relative; display: flex; align-items: center; justify-content: space-between; padding: 3px 22px 0 5px; }
.pal-thumb { position: absolute; left: 20px; top: 4px; width: 149px; height: 16px; background: #cdcdcd; }

/* status */
.status { height: 31px; flex: none; background: #f0f0f0; display: flex; align-items: center; font-size: 12.500px; color: #444; position: relative; }
.fs-box { width: 125px; padding-left: 2px; flex: none; line-height: 16px; }
.fs-row { display: flex; }
.fs-lbl { width: 83px; flex: none; }
.op-lbl { width: 39px; color: #555; padding-right: 2px; }
.op-field { width: 31px; height: 22px; color: #8a8a8a; }
.op-spin { width: 10px; height: 22px; }
.st-sep { height: 31px; margin-left: 6px; }
.eye { margin-left: 4px; flex: none; }
.lock { margin-left: 6px; flex: none; }
.layer { width: 80px; height: 33px; margin-left: 5px; flex: none; background: #fff; border: 1px solid #ccc; display: flex; align-items: center; }
.layer-text { flex: 1; font-size: 11px; font-weight: 600; color: #333; padding-left: 3px; white-space: nowrap; }
.layer-chev { width: 19px; }
.msg { margin-left: 7px; width: 634px; flex: none; font-size: 13.200px; white-space: nowrap; overflow: hidden; color: #444; }
.msg b { font-weight: 700; color: #333; }
.coords { width: 78px; height: 100%; border-left: 1px solid #b5b5b5; padding: 0 6px 0 4px; flex: none; display: flex; flex-direction: column; justify-content: center; line-height: 16px; font-size: 12px; }
.coord-row { display: flex; justify-content: space-between; }
.coord-val { font-family: "Liberation Mono", monospace; font-size: 12px; color: #555; }
.z-lbl { width: 21px; padding-right: 2px; }
.z-field { width: 53px; height: 22px; padding-left: 11px; }
.z-spin { width: 10px; height: 22px; margin-left: 3px; }
.grip { position: absolute; right: 1px; bottom: 1px; }
```
